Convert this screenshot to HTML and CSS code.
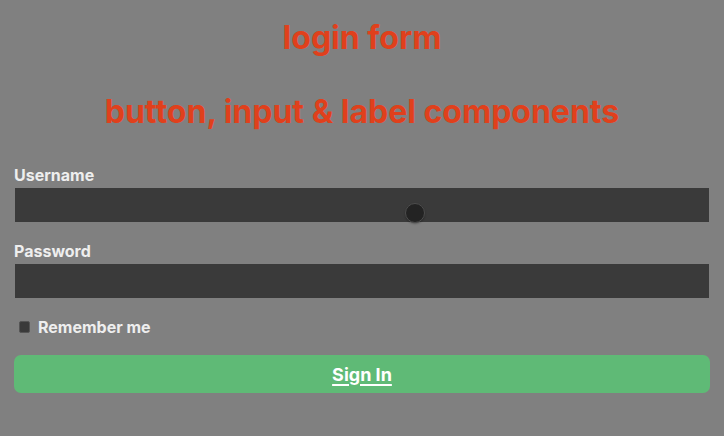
FILE: index.html
```html
<!DOCTYPE html>
<html>
<head>
<meta charset="utf-8">
<link rel="stylesheet" href="styles.css">
</head>
<body>
<main class="page">
  <h1 class="title">login form</h1>
  <h1 class="title title-sub">button, input &amp; label components</h1>
  <form class="form">
    <label class="label" for="u">Username</label>
    <div class="field">
      <input class="input" id="u" type="text">
      <span class="cursor"></span>
    </div>
    <label class="label" for="p">Password</label>
    <input class="input" id="p" type="password">
    <div class="remember">
      <span class="check"></span>
      <span class="remember-text">Remember me</span>
    </div>
    <button class="btn" type="button"><span class="btn-text">Sign In</span></button>
  </form>
</main>
</body>
</html>
```
FILE: styles.css
```css
html, body {
  margin: 0;
  padding: 0;
  background: #808080;
  font-family: Inter, "Liberation Sans", sans-serif;
}
.page {
  padding: 0 14px;
}
.title {
  margin: 0;
  padding-top: 18px;
  text-align: center;
  color: #e0401c;
  font-size: 32px;
  font-weight: 700;
  line-height: 39px;
}
.title-sub {
  padding-top: 35px;
}
.form {
  display: flex;
  flex-direction: column;
  margin-top: 35px;
}
.label {
  color: #eeeeee;
  font-size: 16px;
  font-weight: 700;
  line-height: 19px;
  margin-bottom: 2px;
}
.field {
  position: relative;
}
.input {
  display: block;
  box-sizing: border-box;
  width: 100%;
  height: 36px;
  margin: 0 0 19px 0;
  border: 1px solid #808080;
  background: #3a3a3a;
  outline: none;
}
.cursor {
  position: absolute;
  left: 391px;
  top: 16px;
  width: 18px;
  height: 18px;
  border-radius: 50%;
  background: #232323;
  border: 1.5px solid #4d4d4d;
  box-shadow: 0 1px 2px rgba(0,0,0,0.3);
}
.remember {
  display: flex;
  align-items: center;
  gap: 8px;
  padding-left: 5px;
  height: 18px;
}
.check {
  width: 11px;
  height: 12px;
  background: #3a3a3a;
  border: 1px solid #555555;
  border-radius: 2px;
  box-sizing: border-box;
}
.remember-text {
  color: #eeeeee;
  font-size: 16px;
  font-weight: 700;
}
.btn {
  margin-top: 19px;
  height: 38px;
  border: none;
  border-radius: 7px;
  background: #5fba76;
  font-family: inherit;
  cursor: pointer;
}
.btn-text {
  color: #ffffff;
  font-size: 18px;
  font-weight: 700;
  text-decoration: underline;
  text-decoration-thickness: 2px;
  text-underline-offset: 3px;
}
```
